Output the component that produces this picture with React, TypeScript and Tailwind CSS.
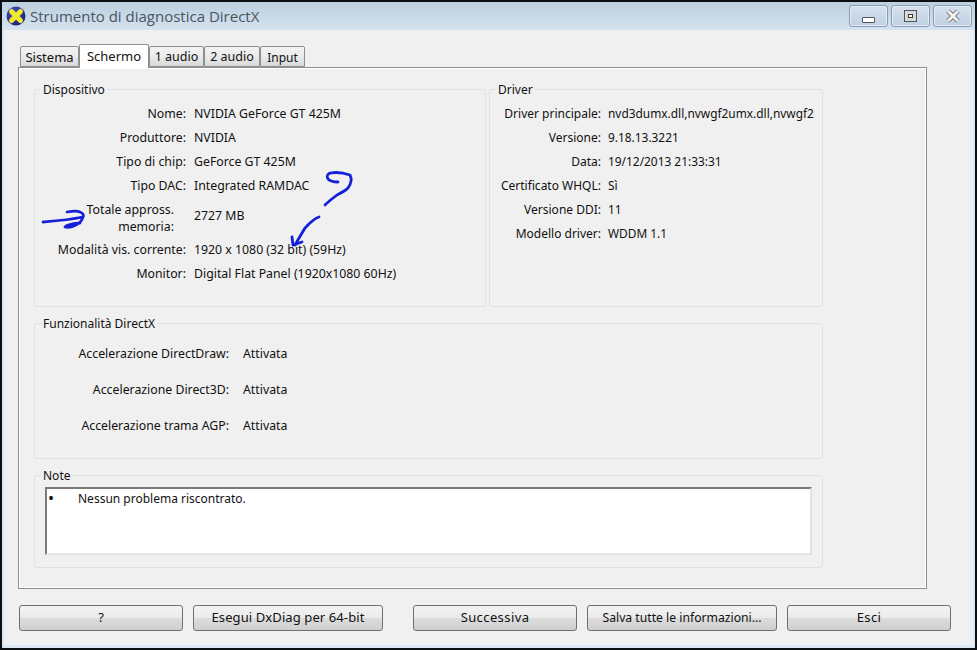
const ui = "font-['Noto_Sans',sans-serif]";

const deviceRows: [string, string, string?][] = [
  ["Nome:", "NVIDIA GeForce GT 425M"],
  ["Produttore:", "NVIDIA"],
  ["Tipo di chip:", "GeForce GT 425M"],
  ["Tipo DAC:", "Integrated RAMDAC"],
  ["Totale appross. memoria:", "2727 MB", "tall"],
  ["Modalità vis. corrente:", "1920 x 1080 (32 bit) (59Hz)"],
  ["Monitor:", "Digital Flat Panel (1920x1080 60Hz)"],
];

const driverRows = [
  ["Driver principale:", "nvd3dumx.dll,nvwgf2umx.dll,nvwgf2"],
  ["Versione:", "9.18.13.3221"],
  ["Data:", "19/12/2013 21:33:31"],
  ["Certificato WHQL:", "Sì"],
  ["Versione DDI:", "11"],
  ["Modello driver:", "WDDM 1.1"],
];

const features = [
  ["Accelerazione DirectDraw:", "Attivata"],
  ["Accelerazione Direct3D:", "Attivata"],
  ["Accelerazione trama AGP:", "Attivata"],
];

function Group({ title, className, children }: { title: string; className: string; children?: React.ReactNode }) {
  return (
    <div className={`relative rounded-[3px] border border-[#dce3e8] ${className}`}>
      <span className="absolute -top-[8px] left-[6px] bg-[#f0f0f0] px-[2px] text-[12px] leading-[16px]">{title}</span>
      {children}
    </div>
  );
}

function Tab({ label, width, active }: { label: string; width: string; active?: boolean }) {
  if (active) {
    return (
      <div className={`z-10 -mb-px flex h-[24px] items-start justify-center rounded-t-[2px] border border-b-0 border-[#8e8f8f] bg-white pt-[3px] text-[13px] leading-[16px] ${width}`}>
        {label}
      </div>
    );
  }
  return (
    <div className={`flex h-[21px] items-center justify-center rounded-t-[2px] border border-[#8e8f8f] bg-gradient-to-b from-[#f3f3f3] via-[#ebebeb] to-[#d8d8d8] pt-[2px] ${width}`}>
      {label}
    </div>
  );
}

function Btn({ label, className }: { label: string; className: string }) {
  return (
    <button className={`flex h-[26px] items-center justify-center rounded-[3px] border border-[#707070] bg-[linear-gradient(#f2f2f2_0%,#ebebeb_48%,#dddddd_50%,#cfcfcf_100%)] ${className}`}>
      {label}
    </button>
  );
}

function CaptionBtn({ children }: { children: React.ReactNode }) {
  return (
    <div className="flex h-[22px] w-[39px] items-center justify-center rounded-[3px] border border-[#8a9cb0] bg-gradient-to-b from-[#d6e2ee] to-[#bfd1e3] shadow-[inset_0_0_0_1px_#e4ecf4]">
      {children}
    </div>
  );
}

export default function App() {
  return (
    <div className={`relative flex h-[650px] w-[977px] flex-col overflow-hidden border-2 border-[#0c0f12] bg-[#dce8f3] text-[#111] ${ui}`}>
      {/* barra del titolo */}
      <div className="flex h-[28px] shrink-0 items-start bg-gradient-to-b from-[#bccfdf] to-[#d5e3f0] pr-[3px]">
        <svg width="20" height="20" viewBox="0 0 20 20" className="ml-[4px] mt-[4px]">
          <defs>
            <radialGradient id="dxBall" cx="40%" cy="35%" r="75%">
              <stop offset="0%" stopColor="#4a56c8" />
              <stop offset="100%" stopColor="#131c6a" />
            </radialGradient>
          </defs>
          <circle cx="10" cy="10" r="9.5" fill="url(#dxBall)" />
          <path d="M5.5 5.5 L14.5 14.5 M14.5 5.5 L5.5 14.5" stroke="#f5ea2a" strokeWidth="5" strokeLinecap="round" />
        </svg>
        <span className="ml-[4px] mt-[5px] font-['Open_Sans',sans-serif] text-[15px] leading-[18px] text-[#4a5560]">
          Strumento di diagnostica DirectX
        </span>
        <div className="ml-auto mt-[3px] flex gap-[3px]">
          <CaptionBtn>
            <div className="mt-[8px] h-[6px] w-[13px] rounded-[1px] border border-[#555] bg-white" />
          </CaptionBtn>
          <CaptionBtn>
            <div className="flex h-[12px] w-[13px] items-center justify-center border border-[#555] bg-[#d8d8d8]">
              <div className="h-[4px] w-[5px] border border-[#333] bg-white" />
            </div>
          </CaptionBtn>
          <CaptionBtn>
            <svg width="16" height="14" viewBox="0 0 16 14">
              <path d="M3 2 L13 12 M13 2 L3 12" stroke="#555" strokeWidth="4.5" />
              <path d="M3 2 L13 12 M13 2 L3 12" stroke="#f4f4f4" strokeWidth="3" />
            </svg>
          </CaptionBtn>
        </div>
      </div>

      {/* contenuto */}
      <div className="mx-[2px] mb-[3px] flex flex-1 flex-col bg-[#f0f0f0] pl-[14px] pt-[14px]">
        <div className="flex h-[23px] items-end pl-[2px]">
          <Tab label="Sistema" width="w-[59px] text-[13px]" />
          <Tab label="Schermo" width="w-[70px]" active />
          <Tab label="1 audio" width="w-[55px] text-[12.5px]" />
          <Tab label="2 audio" width="w-[56px] text-[12.5px]" />
          <Tab label="Input" width="w-[45px] text-[12px]" />
        </div>

        <div className="h-[522px] w-[909px] border border-[#8e8f8f] pl-[15px] pt-[21px] text-[12.3px] shadow-[inset_0_0_0_1px_#fff]">
          <div className="flex gap-[3px]">
            <Group title="Dispositivo" className="h-[218px] w-[452px] pt-[12px]">
              {deviceRows.map(([label, value, tall]) => (
                <div key={label} className={`flex items-center ${tall ? "h-[40px]" : "h-[24px]"}`}>
                  <div className={`w-[151px] text-right ${tall ? "pl-[40px] pr-[12px] leading-[17px]" : ""}`}>{label}</div>
                  <div className={`ml-[8px] whitespace-nowrap ${tall ? "-mt-[4px]" : ""}`}>{value}</div>
                </div>
              ))}
            </Group>
            <Group title="Driver" className="h-[218px] w-[334px] pt-[12px]">
              {driverRows.map(([label, value]) => (
                <div key={label} className="flex h-[24px] items-center">
                  <div className="w-[111px] text-right text-[12px]">{label}</div>
                  <div className="ml-[7px] whitespace-nowrap text-[11.9px]">{value}</div>
                </div>
              ))}
            </Group>
          </div>

          <Group title="Funzionalità DirectX" className="mt-[16px] h-[136px] w-[789px] pt-[12px]">
            {features.map(([label, value]) => (
              <div key={label} className="flex h-[36px] items-center">
                <div className="w-[194px] text-right">{label}</div>
                <div className="ml-[14px]">{value}</div>
              </div>
            ))}
          </Group>

          <Group title="Note" className="mt-[16px] h-[93px] w-[789px] pl-[10px] pt-[11px]">
            <div className="flex h-[68px] w-[767px] items-start border-2 border-b-[#e3e3e3] border-l-[#7a7a7a] border-r-[#e3e3e3] border-t-[#7a7a7a] bg-white pt-[1px] text-[12px]">
              <span className="ml-[1px] w-[30px] text-[16px] leading-[17px]">•</span>
              <span className="leading-[17px]">Nessun problema riscontrato.</span>
            </div>
          </Group>
        </div>

        <div className="mt-[16px] flex pl-[1px]">
          <Btn label="?" className="w-[164px] text-[13px]" />
          <Btn label="Esegui DxDiag per 64-bit" className="ml-[10px] w-[190px] text-[13px] tracking-[0.1px]" />
          <Btn label="Successiva" className="ml-[30px] w-[164px] text-[13px] tracking-[0.4px]" />
          <Btn label="Salva tutte le informazioni..." className="ml-[10px] w-[190px] text-[12.2px]" />
          <Btn label="Esci" className="ml-[10px] w-[164px] text-[13px] tracking-[0.4px]" />
        </div>
      </div>

      {/* segni a penna sopra lo screenshot */}
      <svg width="977" height="650" viewBox="0 0 977 650" className="pointer-events-none absolute -left-[2px] -top-[2px]" fill="none" stroke="#1420d8" strokeWidth="2.8" strokeLinecap="round" strokeLinejoin="round">
        <path d="M43 222 C55 221 68 220 83 217 M67 212 C72 211 78 211 80 212 C83 213 84 215 83 217 C82 221 80 223 76 225 C72 227 68 228 65 227 C66 225 70 224 80 223" />
        <path d="M338 182 C334 182 330 181 328 179 C326 176 328 173 331 173 C336 172 344 173 350 175 C352 179 351 184 348 188 C345 191 341 193 337 195 C333 198 329 201 325 205" />
        <path d="M319 217 C313 219 309 224 305 228 C302 233 299 238 295 245 M292 237 L293 245 L302 242" />
      </svg>
    </div>
  );
}
